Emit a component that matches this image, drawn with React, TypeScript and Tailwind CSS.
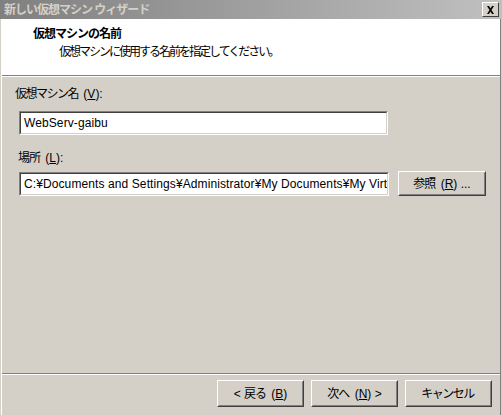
import React from 'react';

const jp = 'font-["Liberation_Sans","Noto_Sans_CJK_JP",sans-serif]';

// CJK runs are drawn narrower, like the proportional kana of the original UI font
const J: React.FC<{ children: React.ReactNode; t?: string }> = ({ children, t = 'tracking-[-1.5px]' }) => (
  <span className={`${t} pr-[2px]`}>{children}</span>
);

// sunken 3D edit box
const Edit: React.FC<{ value: string; className?: string }> = ({ value, className = '' }) => (
  <div className={`border border-t-[#808080] border-l-[#808080] border-b-white border-r-white ${className}`}>
    <div className="h-full border border-t-[#404040] border-l-[#404040] border-b-[#d4d0c8] border-r-[#d4d0c8] bg-white flex items-center pl-[3px] overflow-hidden whitespace-nowrap text-[12px] tracking-[0.1px] text-black">
      {value}
    </div>
  </div>
);

// raised push button
const Button: React.FC<{ children: React.ReactNode; className?: string }> = ({ children, className = '' }) => (
  <div className={`border border-t-white border-l-white border-b-[#404040] border-r-[#404040] ${className}`}>
    <div className="h-full border border-t-[#d4d0c8] border-l-[#d4d0c8] border-b-[#808080] border-r-[#808080] bg-[#d4d0c8] flex items-center justify-center whitespace-pre text-[12px] text-black">
      {children}
    </div>
  </div>
);

export default function App() {
  return (
    <div className={`w-[502px] h-[415px] bg-[#d4d0c8] flex flex-col overflow-hidden ${jp}`}>
      {/* title bar */}
      <div className="h-[19px] flex items-center justify-between pl-[4px] pr-[3px] bg-gradient-to-r from-[#808080] to-[#c0c0c0]">
        <span className="text-[12px] font-bold text-[#d4d0c8] tracking-[-1px]">新しい仮想マシン ウィザード</span>
        <div className="w-[17px] h-[15px] border border-t-white border-l-white border-b-[#404040] border-r-[#404040] bg-[#d4d0c8] flex items-center justify-center">
          <svg width="9" height="8" viewBox="0 0 9 8">
            <path d="M1 0h2l1.5 2.5L6 0h2L5.5 4 8 8H6L4.5 5.5 3 8H1l2.5-4z" fill="#000" />
          </svg>
        </div>
      </div>

      <div className="flex-1 flex flex-col border-l border-l-white ml-[1px] border-r border-r-[#808080] mr-[1px]">
        {/* header */}
        <div className="h-[57px] bg-white flex flex-col pl-[31px] pt-[7px] border-b border-b-[#808080]">
          <span className="text-[12px] font-bold text-black leading-[16px] tracking-[-1px]">仮想マシンの名前</span>
          <span className="mt-[2px] pl-[26px] text-[12px] text-black leading-[16px] tracking-[-2px]">
            仮想マシンに使用する名前を指定してください。
          </span>
        </div>
        <div className="h-px bg-white" />

        {/* body */}
        <div className="flex-1 flex flex-col pl-[13px] pt-[9px]">
          <span className="text-[12px] leading-[16px] text-black whitespace-pre">
            <J>仮想マシン名</J> (<span className="underline">V</span>):
          </span>
          <Edit value="WebServ-gaibu" className="mt-[9px] ml-[4px] w-[369px] h-[24px]" />

          <span className="mt-[15px] ml-[3px] text-[12px] leading-[16px] text-black whitespace-pre">
            <J t="tracking-[-1px]">場所</J> (<span className="underline">L</span>):
          </span>
          <div className="mt-[5px] ml-[4px] flex items-center gap-[9px]">
            <Edit
              value="C:¥Documents and Settings¥Administrator¥My Documents¥My Virtual Machines¥WebServ-gaibu"
              className="w-[370px] h-[24px]"
            />
            <Button className="w-[88px] h-[25px]">
              <J t="tracking-[-1px]">参照</J> (<span className="underline">R</span>) ...
            </Button>
          </div>
        </div>

        {/* separator */}
        <div className="h-px bg-[#808080]" />
        <div className="h-px bg-white" />

        {/* footer buttons */}
        <div className="h-[40px] flex items-start justify-end pt-[5px] pr-[8px] gap-[7px]">
          <Button className="w-[87px] h-[27px]">
            &lt; <J t="tracking-[-1px]">戻る</J> (<span className="underline">B</span>)
          </Button>
          <Button className="w-[87px] h-[27px]">
            <J t="tracking-[-1px]">次へ</J> (<span className="underline">N</span>) &gt;
          </Button>
          <Button className="w-[87px] h-[27px]">
            <J>キャンセル</J>
          </Button>
        </div>
      </div>
    </div>
  );
}
